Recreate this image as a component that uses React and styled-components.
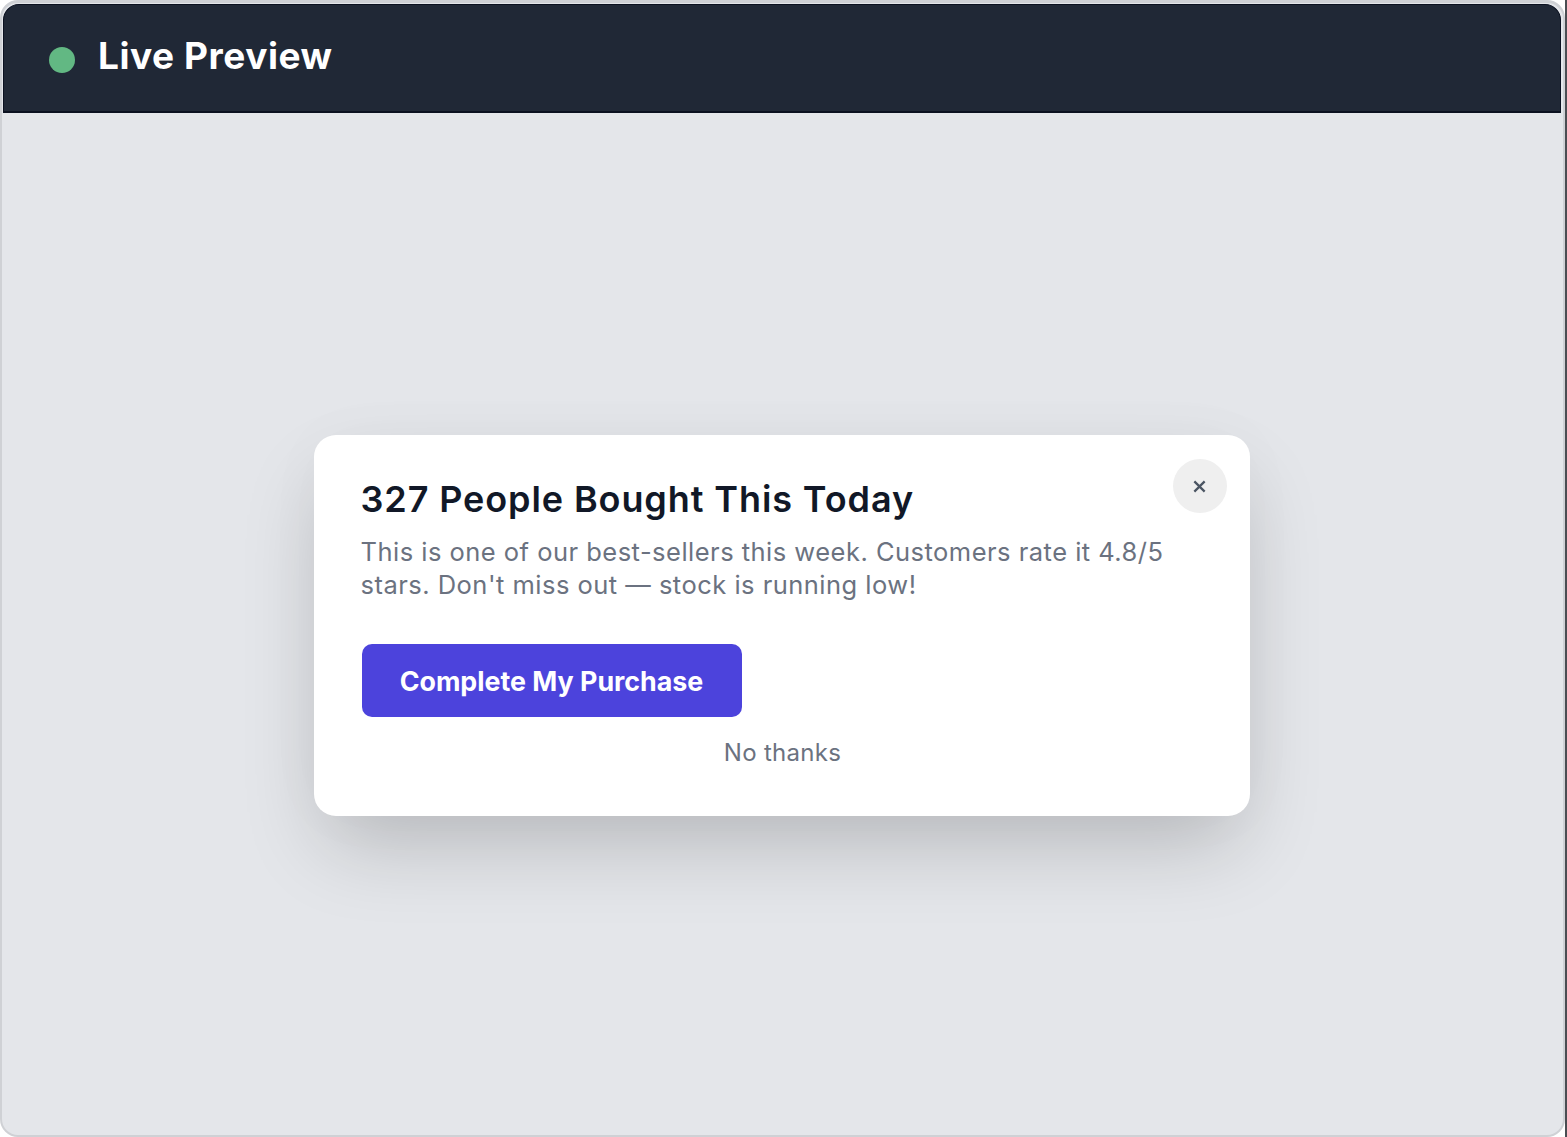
import React from 'react'
import styled, { createGlobalStyle } from 'styled-components'

const GlobalStyle = createGlobalStyle`
  html, body {
    margin: 0;
    padding: 0;
    background: #fff;
  }
  body {
    font-family: Inter, "Liberation Sans", sans-serif;
  }
`;

const Page = styled.div`
  box-sizing: border-box;
  width: 1567px;
  height: 1137px;
  border-right: 2px solid #4a4d52;
`;

const Frame = styled.div`
  box-sizing: border-box;
  width: 100%;
  height: 100%;
  display: flex;
  flex-direction: column;
  background: #e4e6ea;
  border: 2px solid #cfd1d5;
  border-top-width: 3px;
  border-radius: 18px;
  overflow: hidden;
`;

const Header = styled.header`
  flex: none;
  height: 109px;
  margin: 1px 2px 0 1px;
  padding-left: 45px;
  display: flex;
  align-items: center;
  gap: 23px;
  box-sizing: border-box;
  background: #202836;
  border: 1px solid #0b1120;
  border-bottom-width: 2px;
  border-radius: 16px 16px 0 0;
`;

const Dot = styled.span`
  width: 26px;
  height: 26px;
  margin-top: 3px;
  border-radius: 50%;
  background: #62b883;
`;

const HeaderTitle = styled.h1`
  margin: 0 0 5px;
  color: #fff;
  font-size: 37px;
  font-weight: 700;
  line-height: 44px;
  letter-spacing: 0.55px;
`;

const Stage = styled.main`
  flex: 1;
  display: flex;
  align-items: flex-start;
  justify-content: center;
  padding-top: 322px;
`;

const Modal = styled.section`
  position: relative;
  box-sizing: border-box;
  width: 936px;
  height: 381px;
  margin-left: -2px;
  padding: 44px 47px 0;
  background: #fff;
  border-radius: 22px;
  box-shadow: 0 38px 84px -12px rgba(0, 0, 0, 0.2), 0 0 70px rgba(0, 0, 0, 0.025);
`;

const CloseButton = styled.button`
  position: absolute;
  top: 24px;
  right: 23px;
  width: 54px;
  height: 54px;
  padding: 0;
  display: flex;
  align-items: center;
  justify-content: center;
  border: 0;
  border-radius: 50%;
  background: #efefef;
  color: #4b5563;
`;

const Title = styled.h2`
  margin: 0;
  color: #111827;
  font-size: 36px;
  font-weight: 600;
  line-height: 40px;
  letter-spacing: 0.9px;
`;

const Message = styled.p`
  margin: 16px 0 0;
  color: #6b7280;
  font-size: 25.5px;
  line-height: 33px;
  letter-spacing: 0.48px;
`;

const PrimaryButton = styled.button`
  display: block;
  width: 380px;
  height: 73px;
  margin: 43px 0 0 1px;
  padding: 0;
  border: 0;
  border-radius: 10px;
  background: #4c43dc;
  color: #fff;
  font-family: inherit;
  font-size: 26.8px;
  font-weight: 700;
`;

const TextButton = styled.button`
  display: block;
  margin: 20px auto 0;
  padding: 0 0 0 2px;
  border: 0;
  background: none;
  color: #6b7280;
  font-family: inherit;
  font-size: 24px;
  line-height: 32px;
  letter-spacing: 0.3px;
`;

export default function App() {
  return (
    <>
      <GlobalStyle />
      <Page>
        <Frame>
          <Header>
            <Dot />
            <HeaderTitle>Live Preview</HeaderTitle>
          </Header>
          <Stage>
            <Modal>
              <CloseButton aria-label="Close">
                <svg width="15" height="15" viewBox="0 0 16 16" fill="none" stroke="currentColor" strokeWidth="2.4">
                  <path d="M2.5 2.5 13.5 13.5M13.5 2.5 2.5 13.5" />
                </svg>
              </CloseButton>
              <Title>327 People Bought This Today</Title>
              <Message>
                This is one of our best-sellers this week. Customers rate it 4.8/5
                <br />
                stars. Don't miss out — stock is running low!
              </Message>
              <PrimaryButton>Complete My Purchase</PrimaryButton>
              <TextButton>No thanks</TextButton>
            </Modal>
          </Stage>
        </Frame>
      </Page>
    </>
  )
}
